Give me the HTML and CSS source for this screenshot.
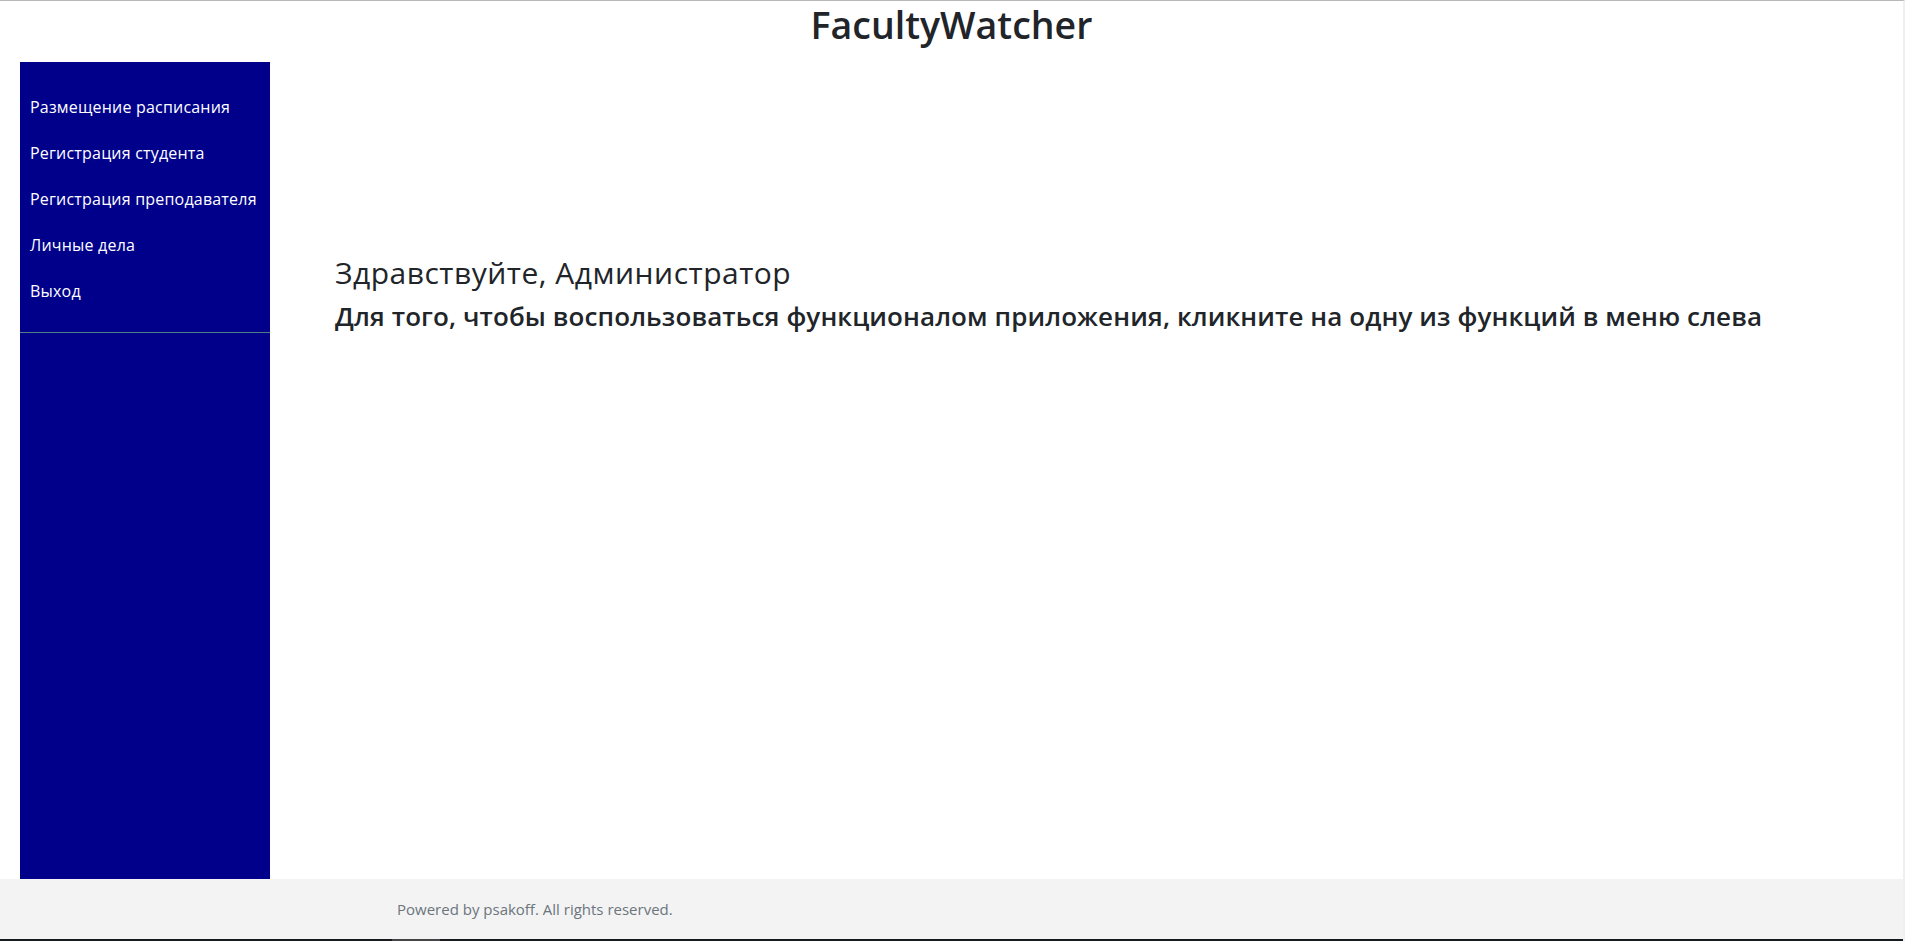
FILE: index.html
```html
<!DOCTYPE html>
<html lang="ru">
<head>
<meta charset="utf-8">
<title>FacultyWatcher</title>
<link rel="stylesheet" href="styles.css">
</head>
<body>
<div class="page">
  <header class="top">
    <h1 class="brand">FacultyWatcher</h1>
  </header>
  <div class="row">
    <aside class="sidebar">
      <nav class="menu">
        <a class="menu-item" href="#">Размещение расписания</a>
        <a class="menu-item" href="#">Регистрация студента</a>
        <a class="menu-item" href="#">Регистрация преподавателя</a>
        <a class="menu-item" href="#">Личные дела</a>
        <a class="menu-item" href="#">Выход</a>
      </nav>
      <hr class="menu-sep">
    </aside>
    <main class="content">
      <h3 class="greet">Здравствуйте, Администратор</h3>
      <h4 class="hint">Для того, чтобы воспользоваться функционалом приложения, кликните на одну из функций в меню слева</h4>
    </main>
  </div>
  <footer class="foot">
    <span class="foot-text">Powered by psakoff. All rights reserved.</span>
  </footer>
  <div class="taskbar"><span class="taskbar-mark"></span></div>
</div>
</body>
</html>
```

FILE: styles.css
```css
* { box-sizing: border-box; }
html, body { margin: 0; padding: 0; height: 100%; }
body {
  font-family: "Open Sans", "Noto Sans", sans-serif;
  color: #212529;
  background: #fff;
}
.page {
  height: 941px;
  display: flex;
  flex-direction: column;
  border-top: 1px solid #b8b8b8;
  border-right: 2px solid #f0f0f0;
}
.top {
  height: 61px;
  display: flex;
  justify-content: center;
}
.brand {
  margin: 0;
  padding-top: 2px;
  font-size: 37.5px;
  font-weight: 600;
  line-height: 44px;
  letter-spacing: 0;
}
.row {
  flex: 1;
  display: flex;
}
.sidebar {
  margin-left: 20px;
  width: 250px;
  background: #00008b;
  padding-top: 22px;
}
.menu {
  display: flex;
  flex-direction: column;
}
.menu-item {
  display: block;
  padding: 11px 10px;
  line-height: 24px;
  font-size: 16px;
  color: #fff;
  text-decoration: none;
  letter-spacing: 0.2px;
}
.menu-sep {
  margin: 18px 0 0;
  border: 0;
  border-top: 1px solid #4c7f86;
}
.content {
  flex: 1;
  padding: 193px 0 0 65px;
}
.greet {
  margin: 0 0 10px;
  font-size: 30px;
  font-weight: 500;
  line-height: 36px;
  letter-spacing: 0.5px;
}
.hint {
  margin: 0;
  font-size: 26px;
  font-weight: 600;
  line-height: 1.2;
  letter-spacing: 0.1px;
}
.foot {
  height: 60px;
  background: #f3f3f3;
  display: flex;
  align-items: center;
  padding-left: 397px;
}
.foot-text {
  font-size: 15px;
  color: #6c757d;
}
.taskbar {
  height: 2px;
  background: #161a1f;
  position: relative;
}
.taskbar-mark {
  position: absolute;
  left: 392px;
  top: 0;
  width: 48px;
  height: 2px;
  background: #444;
}
```
